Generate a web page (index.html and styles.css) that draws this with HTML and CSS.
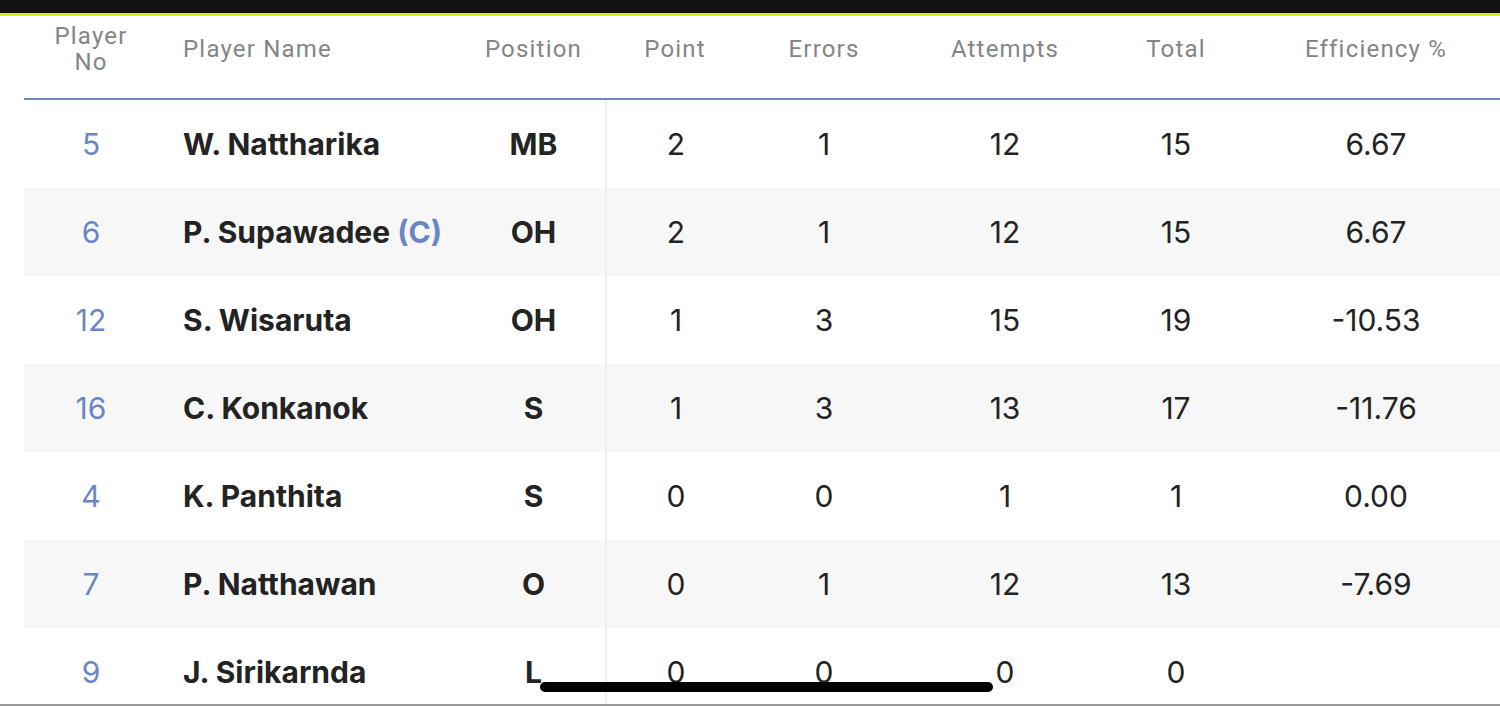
FILE: index.html
```html
<!DOCTYPE html>
<html>
<head>
<meta charset="utf-8">
<link rel="stylesheet" href="styles.css">
</head>
<body>
<div class="screen">
  <div class="topbar"></div>
  <div class="table">
    <div class="row head">
      <div class="c no">Player<br>No</div>
      <div class="c name">Player Name</div>
      <div class="c pos">Position</div>
      <div class="c st">Point</div>
      <div class="c st">Errors</div>
      <div class="c st">Attempts</div>
      <div class="c st">Total</div>
      <div class="c st eff">Efficiency %</div>
    </div>
    <div class="body">
      <div class="row">
        <div class="c no">5</div><div class="c name">W. Nattharika</div><div class="c pos">MB</div>
        <div class="c st first">2</div><div class="c st">1</div><div class="c st">12</div><div class="c st">15</div><div class="c st eff">6.67</div>
      </div>
      <div class="row alt">
        <div class="c no">6</div><div class="c name">P. Supawadee <span class="cap">(C)</span></div><div class="c pos">OH</div>
        <div class="c st first">2</div><div class="c st">1</div><div class="c st">12</div><div class="c st">15</div><div class="c st eff">6.67</div>
      </div>
      <div class="row">
        <div class="c no">12</div><div class="c name">S. Wisaruta</div><div class="c pos">OH</div>
        <div class="c st first">1</div><div class="c st">3</div><div class="c st">15</div><div class="c st">19</div><div class="c st eff">-10.53</div>
      </div>
      <div class="row alt">
        <div class="c no">16</div><div class="c name">C. Konkanok</div><div class="c pos">S</div>
        <div class="c st first">1</div><div class="c st">3</div><div class="c st">13</div><div class="c st">17</div><div class="c st eff">-11.76</div>
      </div>
      <div class="row">
        <div class="c no">4</div><div class="c name">K. Panthita</div><div class="c pos">S</div>
        <div class="c st first">0</div><div class="c st">0</div><div class="c st">1</div><div class="c st">1</div><div class="c st eff">0.00</div>
      </div>
      <div class="row alt">
        <div class="c no">7</div><div class="c name">P. Natthawan</div><div class="c pos">O</div>
        <div class="c st first">0</div><div class="c st">1</div><div class="c st">12</div><div class="c st">13</div><div class="c st eff">-7.69</div>
      </div>
      <div class="row">
        <div class="c no">9</div><div class="c name">J. Sirikarnda</div><div class="c pos">L</div>
        <div class="c st first">0</div><div class="c st">0</div><div class="c st">0</div><div class="c st">0</div><div class="c st eff"></div>
      </div>
    </div>
  </div>
  <div class="bottomline"></div>
  <div class="homebar"></div>
</div>
</body>
</html>
```
FILE: styles.css
```css
* { box-sizing: border-box; }
html, body { margin: 0; padding: 0; background: #fff; }
.screen {
  position: relative;
  width: 1500px;
  height: 707px;
  overflow: hidden;
  display: flex;
  flex-direction: column;
  font-family: Inter, "Liberation Sans", sans-serif;
  color: #232323;
}
.topbar {
  height: 16px;
  flex: none;
  background: #121212;
  border-bottom: 3px solid #d6f01e;
}
.table {
  flex: 1;
  display: flex;
  flex-direction: column;
  margin-left: 24px;
  overflow: hidden;
}
.row {
  display: grid;
  grid-template-columns: 134px 304px 143px 140px 158px 204px 138px 262px;
  height: 88px;
  flex: none;
}
.row.alt { background: #f7f7f7; }
.c {
  display: flex;
  align-items: center;
  justify-content: center;
  text-align: center;
  font-size: 30px;
}
.head {
  height: 84px;
  padding-top: 0;
  padding-bottom: 16px;
  border-bottom: 2px solid #6b86c6;
  margin-right: -30px;
}
.head .c {
  font-family: Roboto, "Liberation Sans", sans-serif;
  font-size: 24px;
  line-height: 26px;
  letter-spacing: 1.2px;
  color: #858585;
  font-weight: 400;
}
.body {
  flex: 1;
  overflow: hidden;
}
.body .no { color: #6b86c6; font-size: 30px; }
.name {
  justify-content: flex-start;
  padding-left: 25px;
  font-weight: 700;
  white-space: pre;
}
.head .name { padding-left: 25px; }
.cap { color: #6b86c6; }
.body .pos { font-weight: 700; }
.body .st { font-size: 30px; }
.first { border-left: 2px solid #efefef; }
.bottomline {
  flex: none;
  height: 3px;
  border-top: 2px solid #9a9a9a;
}
.homebar {
  position: absolute;
  left: 540px;
  top: 682px;
  width: 453px;
  height: 10px;
  border-radius: 5px;
  background: #000;
}
```
